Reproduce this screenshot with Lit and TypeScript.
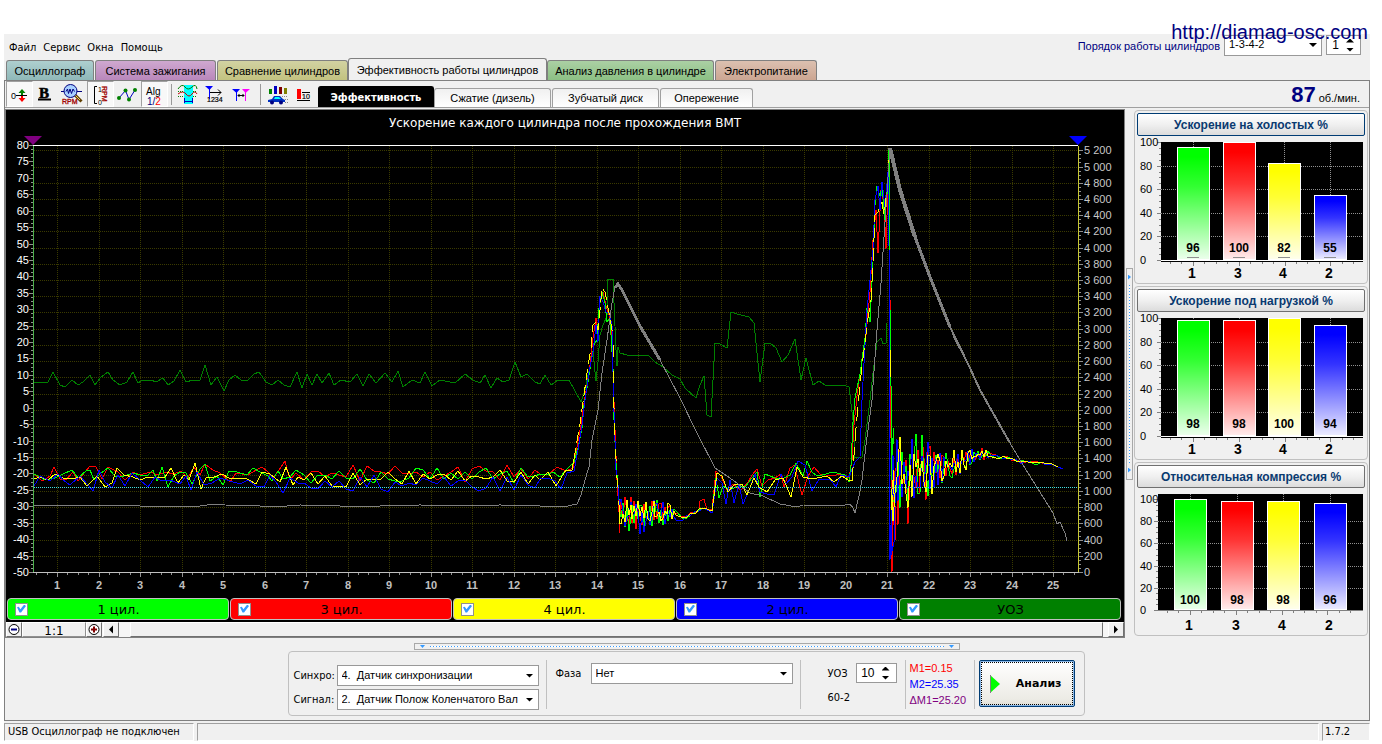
import { LitElement, html, svg, css, nothing } from "lit";
import { customElement, property } from "lit/decorators.js";

type Knot = [number, number, number];

function random(seed: number) {
  let s = seed;
  return () => {
    s = (s * 16807) % 2147483647;
    return s / 2147483647;
  };
}

/** Irregular signal that stays between the low and high edge of an envelope. */
function noise(seed: number, step: number, knots: Knot[]): string {
  const rnd = random(seed);
  rnd();
  const out: string[] = [];
  let high = seed % 2 === 0;
  for (let i = 0; i < knots.length - 1; i++) {
    const [x0, a0, b0] = knots[i];
    const [x1, a1, b1] = knots[i + 1];
    for (let x = x0; x < x1; x += step) {
      const t = (x - x0) / (x1 - x0);
      const a = a0 + (a1 - a0) * t;
      const b = b0 + (b1 - b0) * t;
      const r = rnd();
      const k = high ? r * 0.5 : 1 - r * 0.5;
      high = rnd() > 0.25 ? !high : high;
      out.push(`${Math.round(x)},${Math.round(a + (b - a) * k)}`);
    }
  }
  return out.join(" ");
}

const idle = (seed: number, lo: number, hi: number) =>
  noise(seed, 7, [
    [304, lo, hi],
    [538, lo, hi],
  ]);

const ringing = (seed: number, drop = 0) =>
  noise(seed, 2, [
    [619, 496, 534 + drop],
    [632, 496, 530 + drop],
    [642, 500, 530 + drop],
    [655, 498, 526],
    [668, 502, 524],
    [678, 511, 522],
  ]) +
  " " +
  noise(seed + 1, 4, [
    [683, 516, 521],
    [702, 507, 511],
  ]);

const tail = (seed: number, lo: number, hi: number) =>
  noise(seed, 2, [
    [891, lo, hi],
    [898, 426, 528],
    [904, 450, 504],
    [908, 448, 524],
    [914, 428, 504],
    [924, 430, 504],
    [934, 446, 492],
    [950, 450, 480],
    [964, 450, 472],
    [978, 446, 462],
    [990, 450, 458],
  ]);

const settle = (seed: number) =>
  noise(seed, 4, [
    [992, 453, 458],
    [1008, 456, 461],
    [1022, 460, 463],
    [1046, 462, 465],
    [1054, 464, 466],
  ]);

const TRACES: { color: string; points: string; dash?: string }[] = [
  {
    color: "#008000",
    points:
      "34,382 48,382 53,372 60,385 65,387 72,380 78,385 83,382 90,375 95,385 101,377 108,372 113,380 120,385 127,382 133,372 138,383 143,380 151,380 156,382 163,378 168,385 174,381 180,370 186,382 193,380 200,380 205,365 211,385 217,377 224,391 229,380 235,375 241,380 248,380 254,374 259,372 266,382 272,385 278,380 284,385 290,387 297,372 302,388 307,374 312,385 317,374 322,383 329,373 334,385 341,380 350,382 357,374 363,386 369,374 376,383 385,373 392,382 398,371 403,387 412,380 420,383 425,372 432,386 440,380 455,383 465,374 473,380 480,383 485,375 491,388 497,378 503,382 509,380 515,362 521,377 527,374 535,382 540,384 545,375 551,385 558,380 569,380 575,391 581,402 585,390 590,366 593,352 596,381 598,362 600,335 603,325 607,316 608,279 613,279 616,350 617,366 618,347 620,353 627,355 648,355 655,362 663,367 672,375 680,379 685,388 696,398 700,385 704,376 707,415 711,417 715,343 720,344 727,348 731,312 737,314 749,317 754,323 760,382 765,343 770,343 776,348 782,362 788,355 795,339 801,380 806,358 813,385 819,381 825,385 843,385 849,387 853,420 855,458 862,457 865,440 870,400 873,373 877,342 881,338 883,344 886,343 887,323",
  },
  {
    color: "#ff0000",
    points:
      "34,474 42,481 50,476 54,467 60,479 66,480 73,472 78,481 85,472 90,466 96,467 102,479 108,467 118,472 125,480 133,472 140,475 150,472 158,475 165,472 174,474 181,471 188,478 194,467 200,475 205,464 213,470 220,473 230,482 236,473 248,475 256,470 262,467 268,472 273,478 279,470 285,461 290,480 296,473 " +
      idle(17, 465, 482) +
      " 540,474 548,475 557,467 566,471 573,468 577,447 581,425 584,403 587,385 590,365 593,338 596,318 598,332 600,300 603,292 606,306 609,315 611,326 613,372 615,430 617,480 619,512 " +
      ringing(31) +
      " 700,501 704,499 707,510 712,509 716,471 721,476 727,490 733,484 741,490 748,482 752,475 757,469 762,486 768,480 775,478 781,474 784,487 790,468 795,465 799,484 802,495 808,476 814,467 820,474 832,476 840,474 849,478 852,460 854,425 857,396 861,367 866,335 870,292 873,240 876,210 878,253 881,190 884,204 886,249 889,148 890,300 892,572 894,470 896,540 " +
      tail(45, 448, 548) +
      " " +
      settle(12),
  },
  {
    color: "#00ff00",
    points:
      "34,474 42,478 45,480 55,478 63,474 72,470 78,478 86,471 90,470 94,480 100,474 108,468 115,476 120,477 127,475 133,473 140,475 148,475 153,470 157,481 162,467 168,487 174,476 180,472 186,473 192,484 200,469 205,464 210,481 217,476 223,485 229,471 237,472 247,475 253,468 260,472 268,476 272,481 278,471 283,479 290,477 296,470 " +
      idle(22, 468, 484) +
      " 540,474 548,475 553,472 560,477 568,468 574,462 578,448 582,428 584,405 588,382 591,362 594,345 597,340 599,308 602,292 605,303 607,322 610,318 613,368 614,420 616,463 618,486 620,512 " +
      ringing(52) +
      " 704,508 712,511 716,478 719,498 723,486 730,490 738,486 745,487 752,478 757,472 760,497 765,474 775,478 782,479 790,475 796,463 803,476 807,461 812,472 817,476 822,475 833,472 845,475 849,482 851,465 853,422 855,398 860,374 865,338 867,308 870,322 873,262 875,205 877,186 880,196 882,186 885,220 888,182 889,150 890,310 892,460 894,428 " +
      tail(66, 430, 508) +
      " " +
      settle(25),
  },
  {
    color: "#ffff00",
    points:
      "34,479 40,477 48,480 55,474 63,478 72,479 80,477 87,486 97,476 105,487 112,483 117,468 124,475 133,477 140,480 148,477 156,478 165,477 171,468 178,483 184,475 189,480 195,463 201,489 206,478 214,477 222,474 229,478 238,478 247,479 256,484 262,472 270,474 280,482 286,467 293,485 298,477 " +
      idle(29, 470, 487) +
      " 540,480 548,472 556,486 566,470 572,470 574,459",
  },
  {
    color: "#0000ff",
    points:
      "34,486 40,476 50,481 58,474 63,480 70,485 80,476 88,485 93,491 99,470 105,482 112,488 118,475 125,486 132,473 140,480 148,487 155,477 162,481 170,480 180,484 186,476 191,490 197,472 204,485 212,483 220,478 230,481 240,484 248,480 256,486 264,487 270,475 276,482 283,493 290,478 298,483 " +
      idle(38, 474, 492) +
      " 540,479 548,478 555,481 561,489 567,473 574,471 578,450 582,425 585,400 589,372 593,352 596,325 598,342 600,296 603,302 606,312 609,312 612,325 613,372 614,412 616,470 618,485 620,515 " +
      ringing(94, 14) +
      " 704,508 712,513 717,478 722,483 726,504 730,480 734,503 739,484 743,504 750,488 755,474 760,492 767,494 774,495 781,474 786,484 792,477 798,461 805,465 812,491 819,479 830,479 836,487 841,475 849,477 855,462 860,457 862,400 865,345 867,310 869,290 871,270 873,250 875,200 878,186 880,210 882,182 885,207 888,172 889,246 890,560 893,455 895,538 " +
      tail(99, 438, 556) +
      " " +
      settle(36) +
      " 1058,467 1063,469",
  },
  {
    color: "#ffff00",
    dash: "11 5",
    points:
      "574,459 576,447 580,424 583,402 588,366 591,348 593,325 596,322 598,330 600,310 602,288 605,292 608,308 611,324 613,335",
  },
  {
    color: "#ffff00",
    dash: "12 14",
    points: "613,345 613,375 615,440 617,478 619,505",
  },
  {
    color: "#ffff00",
    points:
      "619,505 " +
      ringing(73) +
      " 704,508 712,511 717,473 722,476 728,492 735,484 742,484 747,495 754,478 759,487 767,492 775,480 783,478 791,497 797,467 803,477 812,479 827,476 834,482 842,476 848,480 852,481",
  },
  {
    color: "#ffff00",
    dash: "14 6",
    points:
      "852,481 854,455 856,428 860,384 864,350 868,318 871,300 873,262 875,215 878,212 882,202 884,215 887,190 889,160",
  },
  { color: "#ffff00", points: "890,350 890,377" },
  { color: "#ffff00", points: "892,520 894,470 " + tail(81, 440, 528) + " " + settle(49) + " 1058,467" },
  {
    color: "#808080",
    points:
      "34,505 40,506 56,505 80,505 100,506 110,505 140,506 150,507 170,506 200,506 214,504 225,505 260,506 275,507 300,505 340,506 380,506 420,505 460,506 500,505 540,506 563,507 577,504 581,495 585,480 589,467 592,440 598,410 602,373 607,340 612,303 615,287 618,283 622,289 640,325 660,360 680,398 697,433 715,468 727,476 737,483 750,493 763,496 780,504 797,507 803,505 840,506 850,504 853,508 855,513 859,496 862,480 866,445 872,400 875,357 877,330 881,283 884,237 890,148 900,190 915,237 930,277 950,327 955,340 970,368 980,390 1010,443 1023,465 1053,513 1057,524 1060,522 1065,533 1067,541",
  },
];

const tickX = (v: number) => 57 + (v - 1) * 41.5;
const leftY = (v: number) => 572 - (v + 50) * 3.285;
const rightY = (v: number) => 572 - (v * 16.22) / 200;
const range = (from: number, to: number, step: number) =>
  Array.from({ length: Math.round((to - from) / step) + 1 }, (_, i) => from + i * step);

@customElement("trace-chart")
class TraceChart extends LitElement {
  static styles = css`
    :host { display: block; }
    svg { display: block; width: 100%; height: auto; background: #000; }
    .crisp { shape-rendering: crispEdges; fill: none; }
    text { font-family: "Liberation Sans", Arial, sans-serif; font-size: 11px; }
    .title { font-family: "DejaVu Sans", Verdana, sans-serif; font-size: 12px; fill: #fff; text-anchor: middle; }
    .left { fill: #fff; text-anchor: end; }
    .right { fill: #c8c8c8; }
    .bottom { fill: #c0c0c0; font-weight: bold; text-anchor: middle; }
  `;

  render() {
    const r = Math.round;
    return html`<svg viewBox="6 110 1118 487" role="img" aria-label="Ускорение каждого цилиндра">
      <text class="title" x="565" y="127">Ускорение каждого цилиндра после прохождения ВМТ</text>
      <g class="crisp" stroke="#3a3a00" stroke-dasharray="1 1">
        ${range(200, 5200, 200).map((v) => svg`<path d="M34 ${r(rightY(v)) + 0.5}H1078"/>`)}
        ${range(1, 25, 1).map((v) => svg`<path d="M${r(tickX(v)) + 0.5} 146V572"/>`)}
      </g>
      <g class="crisp">
        ${TRACES.map((t) => svg`<polyline points=${t.points} stroke=${t.color} stroke-dasharray=${t.dash ?? "none"}/>`)}
        <polyline points="615,288 618,284 622,290 640,326 660,360" stroke="#808080" stroke-width="3"/>
        <polyline points="890,148 900,190 915,237" stroke="#808080" stroke-width="4"/>
        <polyline points="915,237 930,277 950,327" stroke="#808080" stroke-width="3"/>
        <polyline points="950,327 970,368 980,390 1010,443" stroke="#808080" stroke-width="2"/>
        <path d="M34 487.5H1078" stroke="#40e0e0" stroke-dasharray="1 1"/>
        <path d="M33 145.5H1078" stroke="#fff"/>
        <path d="M33.5 146V572" stroke="#4cb04c"/>
        <path d="M1078.5 146V572" stroke="#c8c832"/>
        <path d="M33 572.5H1079" stroke="#c0c0c0"/>
        <g stroke="#909090">
          ${range(-50, 80, 1.25).map((v) => svg`<path d="M${v % 5 === 0 ? 29 : 31} ${r(leftY(v)) + 0.5}H33"/>`)}
          ${range(0, 5200, 50).map((v) => svg`<path d="M1079 ${r(rightY(v)) + 0.5}H${v % 200 === 0 ? 1083 : 1081}"/>`)}
          ${range(0.5, 25.5, 0.25).map((v) => svg`<path d="M${r(tickX(v)) + 0.5} 573V${v % 1 === 0 ? 577 : 575}"/>`)}
        </g>
      </g>
      <path d="M24 136H42L33 145Z" fill="#800080"/>
      <path d="M1069 136H1087L1078 145Z" fill="#0000ff"/>
      ${range(-50, 80, 5).map((v) => svg`<text class="left" x="29" y=${r(leftY(v)) + 4}>${v}</text>`)}
      ${range(0, 5200, 200).map(
        (v) =>
          svg`<text class="right" x="1084" y=${r(rightY(v)) + 4}>${String(v).replace(/(\d)(\d{3})$/, "$1 $2")}</text>`,
      )}
      ${range(1, 25, 1).map((v) => svg`<text class="bottom" x=${r(tickX(v))} y="589">${v}</text>`)}
    </svg>`;
  }
}

interface Bar { name: string; value: number; x: number; color: string }
interface Gauge { title: string; left: number; top: number; zero: number; floor: boolean; bars: Bar[]; marks?: boolean; focus?: boolean }

const bars = (values: number[], xs: number[]): Bar[] =>
  ["1", "3", "4", "2"].map((name, i) => ({
    name,
    value: values[i],
    x: xs[i],
    color: ["#00ff00", "#ff0000", "#ffff00", "#0000ff"][i],
  }));

const GAUGES: Gauge[] = [
  { title: "Ускорение на холостых %", left: 24, top: 6, zero: 124, floor: true, marks: true, focus: true, bars: bars([96, 100, 82, 55], [40, 86, 131, 177]) },
  { title: "Ускорение под нагрузкой %", left: 24, top: 6, zero: 124, floor: true, bars: bars([98, 98, 100, 94], [40, 86, 131, 177]) },
  { title: "Относительная компрессия %", left: 21, top: 11, zero: 122, floor: false, bars: bars([100, 98, 98, 96], [37, 84, 130, 177]) },
];

@customElement("cylinder-gauge")
class CylinderGauge extends LitElement {
  @property({ attribute: false }) gauge!: Gauge;

  static styles = css`
    :host { display: block; border: 1px solid #c0c0c0; border-radius: 4px; padding: 2px; }
    button {
      display: block; width: 100%; height: 23px; padding: 0; border: 1px solid #707070; border-radius: 2px;
      background: linear-gradient(#fff, #f0f0f0 50%, #dcdcdc); color: #0a3a70;
      font: bold 12px "Liberation Sans", Arial, sans-serif;
    }
    button.focus { border: 1px solid #003c74; }
    svg { display: block; width: 100%; height: auto; }
    .crisp { shape-rendering: crispEdges; }
    text { font-family: "Liberation Sans", Arial, sans-serif; font-size: 11px; }
    .value { font-size: 12px; font-weight: bold; text-anchor: middle; }
    .name { font-size: 14px; font-weight: bold; text-anchor: middle; }
  `;

  render() {
    const g = this.gauge;
    const y = (v: number) => Math.round(g.zero - ((g.zero - g.top) * v) / 100);
    return html`
      <button class=${g.focus ? "focus" : ""}>${g.title}</button>
      <svg viewBox="0 0 228 145" role="img" aria-label=${g.title}>
        <defs>
          ${g.bars.map(
            (b) => svg`<linearGradient id=${"f" + b.name} x2="0" y2="1">
              <stop offset="0.08" stop-color=${b.color}/><stop offset="0.35" stop-color=${b.color} stop-opacity="0.8"/>
              <stop offset="1" stop-color=${b.color} stop-opacity="0.08"/></linearGradient>`,
          )}
        </defs>
        <g class="crisp" fill="none">
          <rect x=${g.left} y="6" width=${226 - g.left} height=${g.zero - 6 + (g.floor ? 2 : 0)} fill="#000"/>
          <g stroke="#909090" stroke-dasharray="1 1">
            ${[20, 40, 60, 80].map((v) => svg`<path d="M${g.left} ${y(v) + 0.5}H226"/>`)}
            ${g.bars.map((b) => svg`<path d="M${b.x + 16.5} 6V${g.zero}"/>`)}
          </g>
          <g stroke="#808080">
            ${range(0, 100, 5).map((v) => svg`<path d="M${g.left - (v % 20 ? 2 : 4)} ${y(v) + 0.5}H${g.left}"/>`)}
            ${range(0, 16, 1).map((i) => {
              const major = i % 4 === 2;
              return svg`<path d="M${Math.round(g.bars[0].x - 7 + i * 11.45) + 0.5} ${g.zero + (g.floor ? 2 : 1)}v${major ? 4 : 2}"/>`;
            })}
          </g>
          ${g.floor ? svg`<path d="M${g.left} ${g.zero + 0.5}H226" stroke="#fff"/>` : svg`<path d="M${g.left} ${g.zero + 0.5}H226" stroke="#808080"/>`}
          ${g.bars.map(
            (b) => svg`
            <rect x=${b.x} y=${y(b.value)} width="33" height=${g.zero - y(b.value)} fill="#fff"/>
            <rect x=${b.x + 1} y=${y(b.value) + 1} width="31" height=${g.zero - y(b.value) - 2} fill=${`url(#f${b.name})`}/>
            ${g.marks ? svg`<path d="M${b.x + 10} 121.5h12" stroke="#909090"/>` : nothing}`,
          )}
        </g>
        ${[0, 20, 40, 60, 80, 100].map((v) => svg`<text x="3" y=${y(v) + 4}>${v}</text>`)}
        ${g.bars.map(
          (b) => svg`<text class="value" x=${b.x + 16} y="116">${b.value}</text>
            <text class="name" x=${b.x + 15} y="142">${b.name}</text>`,
        )}
      </svg>`;
  }
}

const ICONS = {
  zero: svg`<text x="5" y="18" font-size="9">0</text><path d="M10 14.5H21" stroke="#000"/><path d="M16 8L19.5 12H17V14H15V12H12.5Z" fill="#008000"/><path d="M16 21L12.5 17H15V15H17V17H19.5Z" fill="#f00"/>`,
  bold: svg`<text x="6" y="17" font-size="15" font-weight="bold" font-family="Liberation Serif, serif" stroke="#000" stroke-width="0.6">B</text><path d="M5 18.5H18" stroke="#000" stroke-width="2"/>`,
  lens: svg`<path d="M1 10.5H22" stroke="#000080"/><path d="M15 14L21.5 20.5" stroke="#604000" stroke-width="3"/><path d="M15 14L20 19" stroke="#f0d060"/><circle cx="10.5" cy="10" r="6.5" fill="#a8d0ff" stroke="#000080"/><path d="M6 10.5L7.5 8L8.5 12.5L10 8L11.5 12.5L13 8L14.5 10.5" fill="none" stroke="#000080"/><text x="2" y="23" font-size="7" fill="#a00000" stroke="#a00000" stroke-width="0.3">RPM</text>`,
  scale: svg`<path d="M10 5.5H7.5V22.5H10" fill="none" stroke="#000"/><text x="11" y="11" font-size="7">1</text><text x="11" y="24" font-size="7">0</text><text transform="translate(15 5) rotate(90)" font-size="7" fill="#a00000" stroke="#a00000" stroke-width="0.3">RPM</text>`,
  points: svg`<path d="M5 17L11.5 9.5L15 18.5L21 9" fill="none" stroke="#0000c0"/><g fill="#008000"><circle cx="5" cy="17" r="2"/><circle cx="11.5" cy="9.5" r="2"/><circle cx="15" cy="18.5" r="2"/><circle cx="21" cy="9" r="2"/></g>`,
  alg: svg`<text x="5" y="14" font-size="10">Alg</text><text x="6" y="24" font-size="10" fill="#000080">1/<tspan fill="#f00">2</tspan></text>`,
  waves: svg`<path d="M10 4H19V23H10Z" fill="#00ffff"/><path d="M4 8Q8 2 11 6T18 6T23 8" fill="none" stroke="#008000"/><path d="M4 13Q9 9 12 13T18 13T23 13" fill="none" stroke="#c00000"/><path d="M4 15.5H9M19 15.5H23M4 10.5H9M19 10.5H23" stroke="#008000" stroke-dasharray="1 1"/><path d="M10.5 17V22M18.5 17V22M11 20.5H18" stroke="#0000c0"/>`,
  order: svg`<path d="M4 5H12L8.5 9Z" fill="#00f"/><path d="M8.5 8V18" stroke="#00f"/><path d="M9 11.5H20M17 8.5L20 11.5L17 14.5" fill="none" stroke="#000"/><text x="6" y="21" font-size="7" stroke="#000" stroke-width="0.2">1234</text>`,
  markers: svg`<path d="M4 8H12L8.5 12Z" fill="#00f"/><path d="M8.5 9V20" stroke="#00f"/><path d="M14 8H22L17.5 12Z" fill="#f0f"/><path d="M17.5 9V20" stroke="#f0f"/><path d="M10 14.5H16M11.5 13L10 14.5L11.5 16M14.5 13L16 14.5L14.5 16" fill="none" stroke="#000"/>`,
  car: svg`<path d="M6 8H9V13H6Z" fill="#008000"/><path d="M11 5H14V13H11Z" fill="#0000c0"/><path d="M16 6H19V13H16Z" fill="#800000"/><path d="M21 7H24V13H21Z" fill="#808000"/><path d="M5 19L9 18L11 15H17L20 18L22 19V21H5Z" fill="#0030c0"/><path d="M11 18L12 16H16L18 18Z" fill="#00ffff"/><circle cx="9" cy="21.5" r="2" fill="#000080"/><circle cx="18" cy="21.5" r="2" fill="#000080"/><path d="M19 15.5h6M22 18.5h3M22 21.5h3" stroke="#888" stroke-dasharray="1 1"/>`,
  ten: svg`<path d="M7 8H11V18H7Z" fill="#f00"/><path d="M12 11.5H20M7 19.5H20" stroke="#000"/><text x="12" y="18" font-size="7" stroke="#000" stroke-width="0.2">10</text>`,
};

const TOOLS: ({ icon: unknown; label: string; down?: boolean } | string)[] = [
  { icon: ICONS.zero, label: "Ноль", down: true },
  { icon: ICONS.bold, label: "Толщина" },
  { icon: ICONS.lens, label: "Обороты" },
  { icon: ICONS.scale, label: "Шкала", down: true },
  { icon: ICONS.points, label: "Точки" },
  { icon: ICONS.alg, label: "Алгоритм", down: true },
  "rule",
  { icon: ICONS.waves, label: "Фильтр" },
  { icon: ICONS.order, label: "Порядок" },
  { icon: ICONS.markers, label: "Маркеры" },
  "rule wide",
  { icon: ICONS.car, label: "Отчёт" },
  { icon: ICONS.ten, label: "Десять" },
];

const TABS = [
  { text: "Осциллограф", cls: "teal" },
  { text: "Система зажигания", cls: "violet" },
  { text: "Сравнение цилиндров", cls: "olive" },
  { text: "Эффективность работы цилиндров", cls: "current" },
  { text: "Анализ давления в цилиндре", cls: "green" },
  { text: "Электропитание", cls: "brown" },
];

const MODES = ["Эффективность", "Сжатие (дизель)", "Зубчатый диск", "Опережение"];

const LEGEND = [
  { text: "1 цил.", cls: "c1" },
  { text: "3 цил.", cls: "c3" },
  { text: "4 цил.", cls: "c4" },
  { text: "2 цил.", cls: "c2" },
  { text: "УОЗ", cls: "c5" },
];

@customElement("app-root")
class AppRoot extends LitElement {
  static styles = css`
    :host {
      display: flex; flex-direction: column; box-sizing: border-box; min-height: 100vh; position: relative;
      padding: 34px 12px 5px 4px; background: #fff; color: #000;
      font: 11px "DejaVu Sans Condensed", Tahoma, "DejaVu Sans", sans-serif;
    }
    * { box-sizing: border-box; }
    button, input, select { font: inherit; color: inherit; margin: 0; }
    .window { background: #f0f0f0; display: flex; flex-direction: column; flex: 1; }
    .watermark {
      position: absolute; right: 14px; top: 20px; color: #000080; text-decoration: none;
      font: 20px/24px "Liberation Sans", Arial, sans-serif;
    }
    header { display: flex; align-items: flex-start; height: 24px; padding: 0 9px 0 5px; }
    nav { display: flex; gap: 7px; flex: 1; line-height: 28px; }
    nav a { color: #000; text-decoration: none; }
    .order { display: flex; align-items: center; gap: 4px; color: #000080; height: 22px; }
    .order label { padding-top: 2px; font: 11px "Liberation Sans", Arial, sans-serif; }
    .order .combo { width: 98px; }
    .order .spin { width: 35px; }

    .combo { display: grid; color: #000; }
    .combo select, .combo::after { grid-area: 1 / 1; }
    .combo select {
      appearance: none; width: 100%; height: 21px; border: 1px solid #999; border-radius: 0; background: #fff;
      padding: 0 18px 2px 4px; font: 11px "Liberation Sans", Arial, sans-serif; text-overflow: ellipsis;
    }
    .combo::after {
      content: ""; width: 8px; height: 4px; margin-right: 5px; justify-self: end; align-self: center;
      background: #000; clip-path: polygon(0 0, 100% 0, 50% 100%); pointer-events: none;
    }
    .spin { display: flex; height: 20px; border: 1px solid #999; background: #fff; color: #000; }
    .spin input {
      border: 0; padding: 0 2px 0 0; background: none; min-width: 0; width: 0; flex: 1; text-align: right;
      font: 12px "Liberation Sans", Arial, sans-serif;
    }
    .spin span { display: flex; flex-direction: column; justify-content: center; gap: 5px; padding: 0 6px 0 5px; }
    .spin button { border: 0; padding: 0; width: 8px; height: 4px; background: #000; clip-path: polygon(0 100%, 50% 0, 100% 100%); }
    .spin button + button { clip-path: polygon(0 0, 100% 0, 50% 100%); }

    .tabs { display: flex; align-items: flex-end; height: 22px; padding-left: 2px; }
    .tabs button {
      height: 20px; border: 1px solid #808080; border-bottom: 0; border-radius: 3px 3px 0 0; padding: 0; margin-right: 1px;
      font: 11px "Liberation Sans", Arial, sans-serif; white-space: nowrap;
    }
    .tabs .teal { background: linear-gradient(#aecfcf, #8fb8b8); width: 88px; }
    .tabs .violet { background: linear-gradient(#cfa8d0, #b987bb); width: 121px; }
    .tabs .olive { background: linear-gradient(#d2d2a2, #c2c280); width: 131px; margin-right: 0; }
    .tabs .current { background: #f0f0f0; height: 23px; width: 199px; margin-bottom: -1px; margin-right: 0; }
    .tabs .green { background: linear-gradient(#abd0a4, #8cc084); width: 167px; }
    .tabs .brown { background: linear-gradient(#dcc0b0, #cca692); width: 102px; }

    .page { border: 1px solid #808080; display: flex; flex-direction: column; flex: 1; }
    .toolbar { display: flex; height: 27px; border-bottom: 1px solid #a0a0a0; padding-left: 1px; align-items: flex-end; }
    .tool { width: 27px; height: 26px; padding: 0; border: 1px solid transparent; background: none; }
    .tool svg { display: block; width: 26px; height: 26px; margin: -1px; font-family: "Liberation Sans", Arial, sans-serif; }
    .tool.down { background: #f8f8f8; border-color: #a0a0a0 #fff #fff #a0a0a0; }
    .rule { width: 1px; align-self: stretch; margin: 3px 2px 2px 3px; background: #999; }
    .rule.wide { margin-left: 5px; }
    .modes { display: flex; align-items: flex-end; gap: 1px; flex: 1; padding-left: 1px; }
    .modes button {
      height: 19px; border: 1px solid #a0a0a0; border-bottom: 0; border-radius: 3px 3px 0 0; padding: 0; width: 107px;
      background: linear-gradient(#f0f0f0, #fff); font: 11px "Liberation Sans", Arial, sans-serif;
    }
    .modes button:nth-child(1) {
      width: 116px; height: 21px; background: #000; color: #fff; border-color: #000; margin-right: -1px;
      font: bold 11px "DejaVu Sans Condensed", Verdana, sans-serif;
    }
    .modes button:nth-child(2) { width: 117px; }
    .modes button:nth-child(4) { width: 93px; }
    .rpm { display: flex; align-items: baseline; gap: 3px; padding-right: 9px; font: 11px/18px "Liberation Sans", Arial, sans-serif; }
    .rpm b { font-size: 22px; color: #000080; }

    main { display: grid; grid-template-columns: minmax(0, 1fr) 9px 234px; padding: 1px 1px 0 0; align-items: start; }
    .scope { border: 1px solid #808080; background: #000; }
    .legend { display: grid; grid-template-columns: repeat(5, 1fr); gap: 1px; padding: 1px 3px 2px 1px; }
    .legend label {
      display: flex; align-items: center; height: 22px; border: 1px solid #c0c0c0; border-radius: 4px; padding: 0 19px 0 7px;
      font: 13px "DejaVu Sans", Verdana, sans-serif;
    }
    .legend label span { flex: 1; text-align: center; }
    .legend input {
      appearance: none; display: block; width: 13px; height: 13px; background: #fff; border: 1px solid #909090;
    }
    .legend input:checked::after {
      content: ""; display: block; width: 9px; height: 8px; margin: 1px; background: #3399ff;
      clip-path: polygon(0 35%, 20% 28%, 38% 58%, 80% 0, 100% 20%, 45% 100%, 28% 100%);
    }
    .c1 { background: #00ff00; } .c3 { background: #ff0000; } .c4 { background: #ffff00; }
    .c2 { background: #0000ff; } .c5 { background: #008000; }

    .scroll { display: flex; height: 15px; background: #f6f6f6; }
    .scroll button { width: 16px; padding: 0; border: 1px solid; border-color: #fff #707070 #707070 #fff; background: #f0f0f0; }
    .scroll svg { display: block; width: 14px; height: 13px; }
    .zoom { width: 64px; text-align: center; background: #f0f0f0; border: 1px solid; border-color: #fff #909090 #909090 #fff; font: 12px/16px "DejaVu Sans", Verdana, sans-serif; }
    .scroll .prev { margin: 0 11px 0 1px; }
    .thumb { flex: 1; background: #f0f0f0; border: 1px solid; border-color: #fff #707070 #707070 #fff; }
    .scroll .next { margin-left: 5px; }

    .vsplit, .hsplit { border: 1px solid #a8a8a8; display: flex; align-items: center; justify-content: space-between; }
    .vsplit { align-self: center; justify-self: center; width: 7px; height: 212px; flex-direction: column; padding: 6px 0; }
    .vsplit i { flex: 1; width: 1px; margin: 5px 0; background: repeating-linear-gradient(#3399ff 0 1px, #fff 1px 3px); }
    .vsplit b { width: 3px; height: 5px; background: #3399ff; clip-path: polygon(0 0, 100% 50%, 0 100%); }
    .hsplit { align-self: center; width: 546px; height: 7px; margin-top: 5px; padding: 0 5px; }
    .hsplit i { flex: 1; height: 1px; margin: 0 5px; background: repeating-linear-gradient(90deg, #3399ff 0 1px, #fff 1px 3px); }
    .hsplit b { width: 5px; height: 3px; background: #3399ff; clip-path: polygon(0 0, 100% 0, 50% 100%); }
    aside { display: flex; flex-direction: column; gap: 2px; padding-top: 1px; }

    .setup {
      align-self: center; display: flex; height: 65px; margin: 1px 2px 4px 0; border: 1px solid #c0c0c0; border-radius: 4px;
      padding: 8px 9px 6px 5px;
    }
    .setup > * + * { border-left: 1px solid #c0c0c0; }
    .pair { display: grid; grid-template-columns: 43px 202px; align-items: center; row-gap: 3px; padding: 5px 7px 0 0; align-content: start; }
    .phase { display: grid; grid-template-columns: 35px 202px; align-content: start; align-items: center; padding: 3px 7px 0 9px; }
    .advance { display: grid; grid-template-columns: 28px 41px; align-items: center; align-content: start; row-gap: 8px; padding: 3px 8px 0 27px; }
    .readout { width: 69px; padding: 0 0 0 4px; font: 11px/16px "Liberation Sans", Arial, sans-serif; white-space: nowrap; }
    .m1 { color: #f00; } .m2 { color: #00f; } .dm { color: #800080; }
    .run { padding-left: 4px; }
    .run button {
      display: flex; align-items: center; width: 96px; height: 47px; padding: 0 12px 0 7px; border: 1px solid #003c74; border-radius: 2px;
      background: linear-gradient(#fff, #ecebe5 85%, #e0ded4); box-shadow: inset 0 0 0 1px #8ab8e8; outline: 1px dotted #000; outline-offset: -3px;
      font: bold 11px "DejaVu Sans", Verdana, sans-serif; white-space: nowrap;
    }
    .run span { flex: 1; text-align: right; }
    .run svg { width: 14px; height: 20px; }

    footer { display: flex; gap: 3px; height: 18px; margin-top: 2px; line-height: 16px; }
    footer div { border: 1px solid; border-color: #a0a0a0 #fff #fff #a0a0a0; padding: 0 3px; white-space: nowrap; }
    footer div:nth-child(1) { width: 190px; }
    footer div:nth-child(2) { flex: 1; }
    footer div:nth-child(3) { width: 48px; padding-left: 2px; }
  `;

  render() {
    return html`
      <div class="window">
        <header>
          <nav>
            <a href="#file">Файл</a><a href="#service">Сервис</a><a href="#windows">Окна</a><a href="#help">Помощь</a>
          </nav>
          <div class="order">
            <label for="order">Порядок работы цилиндров</label>
            <div class="combo"><select id="order"><option>1-3-4-2</option></select></div>
            <div class="spin"><input aria-label="Цилиндр" value="1" />
              <span><button aria-label="Больше"></button><button aria-label="Меньше"></button></span></div>
          </div>
        </header>
        <div class="tabs">${TABS.map((t) => html`<button class=${t.cls}>${t.text}</button>`)}</div>
        <div class="page">
          <div class="toolbar">
            ${TOOLS.map((t) =>
              typeof t === "string"
                ? html`<span class=${t}></span>`
                : html`<button class="tool ${t.down ? "down" : ""}" aria-label=${t.label}><svg viewBox="0 0 26 26">${t.icon}</svg></button>`,
            )}
            <div class="modes">${MODES.map((m) => html`<button>${m}</button>`)}</div>
            <div class="rpm"><b>87</b><span>об./мин.</span></div>
          </div>
          <main>
            <div class="scope">
              <trace-chart></trace-chart>
              <div class="legend">
                ${LEGEND.map((l) => html`<label class=${l.cls}><input type="checkbox" checked /><span>${l.text}</span></label>`)}
              </div>
              <div class="scroll">
                <button aria-label="Уменьшить"><svg viewBox="0 0 14 13"><circle cx="7" cy="6.5" r="5" fill="#fff" stroke="#000"/><path d="M4 6.5H10" stroke="#000080" stroke-width="2"/></svg></button>
                <div class="zoom">1:1</div>
                <button aria-label="Увеличить"><svg viewBox="0 0 14 13"><circle cx="7" cy="6.5" r="5" fill="#fff" stroke="#000"/><path d="M4 6.5H10M7 3.5V9.5" stroke="#800000" stroke-width="2"/></svg></button>
                <button class="prev" aria-label="Назад"><svg viewBox="0 0 14 13"><path d="M9 2.5V10.5L5 6.5Z"/></svg></button>
                <div class="thumb"></div>
                <button class="next" aria-label="Вперёд"><svg viewBox="0 0 14 13"><path d="M5 2.5V10.5L9 6.5Z"/></svg></button>
              </div>
            </div>
            <div class="vsplit"><b></b><i></i><b></b></div>
            <aside>${GAUGES.map((g) => html`<cylinder-gauge .gauge=${g}></cylinder-gauge>`)}</aside>
          </main>
          <div class="hsplit"><b></b><i></i><b></b></div>
          <div class="setup">
            <div class="pair">
              <label for="sync">Синхро:</label>
              <div class="combo"><select id="sync"><option>4.&nbsp; Датчик синхронизации</option></select></div>
              <label for="signal">Сигнал:</label>
              <div class="combo"><select id="signal"><option>2.&nbsp; Датчик Полож Коленчатого Вал</option></select></div>
            </div>
            <div class="phase">
              <label for="phase">Фаза</label>
              <div class="combo"><select id="phase"><option>Нет</option></select></div>
            </div>
            <div class="advance">
              <label for="advance">УОЗ</label>
              <div class="spin"><input id="advance" value="10" />
                <span><button aria-label="Больше"></button><button aria-label="Меньше"></button></span></div>
              <div>60-2</div>
            </div>
            <div class="readout">
              <div class="m1">M1=0.15</div><div class="m2">M2=25.35</div><div class="dm">ΔM1=25.20</div>
            </div>
            <div class="run">
              <button><svg viewBox="0 0 14 20"><path d="M3 1L13 10L3 19Z" fill="#00ff00"/><path d="M3.5 1V19" stroke="#808080"/></svg><span>Анализ</span></button>
            </div>
          </div>
        </div>
        <footer><div>USB Осциллограф не подключен</div><div></div><div>1.7.2</div></footer>
      </div>
      <a class="watermark" href="#site">http://diamag-osc.com</a>
    `;
  }
}
